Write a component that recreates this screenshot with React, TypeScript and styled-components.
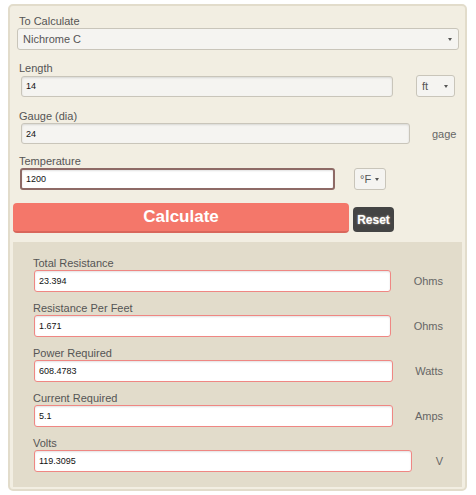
import React from "react";
import styled, { createGlobalStyle } from "styled-components";

const Global = createGlobalStyle`
  html, body { margin: 0; padding: 0; background: #ffffff; }
  body { font-family: "Liberation Sans", Arial, sans-serif; }
  * { box-sizing: border-box; }
`;

const Panel = styled.div`
  margin: 4px 9px 0 8px;
  background: #f2eee2;
  border: 2px solid #e2dccb;
  border-radius: 5px;
  padding: 9px 3px 2px 3px;
`;

const Group = styled.div<{ $mb: number }>`
  margin-bottom: ${(p) => p.$mb}px;
`;

const Label = styled.label<{ $ml?: number }>`
  display: block;
  font-size: 11px;
  line-height: 13px;
  color: #555;
  margin-left: ${(p) => p.$ml ?? 6}px;
`;

const Row = styled.div`
  display: flex;
  align-items: center;
`;

const SelectBox = styled.div<{ $w?: number; $ml: number; $mr?: number; $grow?: boolean }>`
  display: flex;
  align-items: center;
  justify-content: space-between;
  height: 22px;
  ${(p) => (p.$grow ? "flex: 1;" : `width: ${p.$w}px;`)}
  margin-left: ${(p) => p.$ml}px;
  margin-right: ${(p) => p.$mr ?? 0}px;
  padding: 0 5px 0 5px;
  background: #f5f4f1;
  border: 1px solid #c9c5ba;
  border-radius: 3px;
  font-size: 11px;
  color: #555;
`;

const Arrow = styled.span`
  width: 0;
  height: 0;
  border-left: 2px solid transparent;
  border-right: 2px solid transparent;
  border-top: 3px solid #555;
  margin-right: 1px;
`;

const TextInput = styled.div<{ $w: number; $ml: number; $h?: number; $variant?: "plain" | "focus" | "result" }>`
  display: flex;
  align-items: center;
  width: ${(p) => p.$w}px;
  height: ${(p) => p.$h ?? 21}px;
  margin-left: ${(p) => p.$ml}px;
  padding-left: 4px;
  font-size: 9px;
  color: #111;
  border-radius: 3px;
  background: ${(p) => (p.$variant === "plain" ? "#f5f4f1" : "#ffffff")};
  border: ${(p) =>
    p.$variant === "focus"
      ? "2px solid #8e6a66"
      : p.$variant === "result"
      ? "1px solid #ef8783"
      : "1px solid #c9c5ba"};
  box-shadow: inset 0 1px 2px rgba(0, 0, 0, 0.12);
`;

const Unit = styled.span<{ $ml: number }>`
  font-size: 11px;
  color: #666;
  margin-left: ${(p) => p.$ml}px;
`;

const ButtonRow = styled.div`
  display: flex;
  align-items: flex-start;
  margin-bottom: 9px;
`;

const CalcButton = styled.button`
  width: 336px;
  height: 30px;
  margin-left: 0;
  background: #f4776a;
  border: none;
  border-bottom: 2px solid #d9665b;
  border-radius: 4px;
  color: #fff;
  font-family: "Liberation Sans", Arial, sans-serif;
  font-weight: bold;
  font-size: 17px;
  padding: 0;
`;

const ResetButton = styled.button`
  margin-top: 4px;
  margin-left: 4px;
  width: 41px;
  height: 25px;
  background: #444444;
  border: none;
  border-radius: 4px;
  color: #fff;
  font-family: "Liberation Sans", Arial, sans-serif;
  font-weight: bold;
  font-size: 12px;
  padding: 0;
  text-shadow: 0 0 2px rgba(255, 240, 220, 0.7);
`;

const Results = styled.div`
  background: #e2dccb;
  padding: 15px 19px 15px 20px;
`;

const ResultRow = styled.div`
  margin-bottom: 10px;
  &:last-child { margin-bottom: 0; }
`;

const ResultUnit = styled.span`
  margin-left: auto;
  font-size: 11px;
  color: #666;
`;

const results = [
  { label: "Total Resistance", value: "23.394", unit: "Ohms", w: 357 },
  { label: "Resistance Per Feet", value: "1.671", unit: "Ohms", w: 357 },
  { label: "Power Required", value: "608.4783", unit: "Watts", w: 359 },
  { label: "Current Required", value: "5.1", unit: "Amps", w: 359 },
  { label: "Volts", value: "119.3095", unit: "V", w: 378 },
];

export default function App() {
  return (
    <>
      <Global />
      <Panel>
        <Group $mb={12}>
          <Label $ml={6}>To Calculate</Label>
          <Row>
            <SelectBox $grow $ml={4} $mr={3}>
              <span>Nichrome C</span>
              <Arrow />
            </SelectBox>
          </Row>
        </Group>
        <Group $mb={13}>
          <Label $ml={6}>Length</Label>
          <Row>
            <TextInput $w={372} $ml={8} $h={21} $variant="plain">14</TextInput>
            <SelectBox $w={39} $ml={23}>
              <span>ft</span>
              <Arrow />
            </SelectBox>
          </Row>
        </Group>
        <Group $mb={11}>
          <Label $ml={6}>Gauge (dia)</Label>
          <Row>
            <TextInput $w={389} $ml={8} $variant="plain">24</TextInput>
            <Unit $ml={22}>gage</Unit>
          </Row>
        </Group>
        <Group $mb={13}>
          <Label $ml={6}>Temperature</Label>
          <Row>
            <TextInput $w={315} $ml={7} $h={22} $variant="focus">1200</TextInput>
            <SelectBox $w={32} $ml={19}>
              <span>°F</span>
              <Arrow />
            </SelectBox>
          </Row>
        </Group>
        <ButtonRow>
          <CalcButton>Calculate</CalcButton>
          <ResetButton>Reset</ResetButton>
        </ButtonRow>
        <Results>
          {results.map((r) => (
            <ResultRow key={r.label}>
              <Label $ml={0}>{r.label}</Label>
              <Row>
                <TextInput $w={r.w} $ml={1} $h={22} $variant="result">
                  {r.value}
                </TextInput>
                <ResultUnit>{r.unit}</ResultUnit>
              </Row>
            </ResultRow>
          ))}
        </Results>
      </Panel>
    </>
  );
}
